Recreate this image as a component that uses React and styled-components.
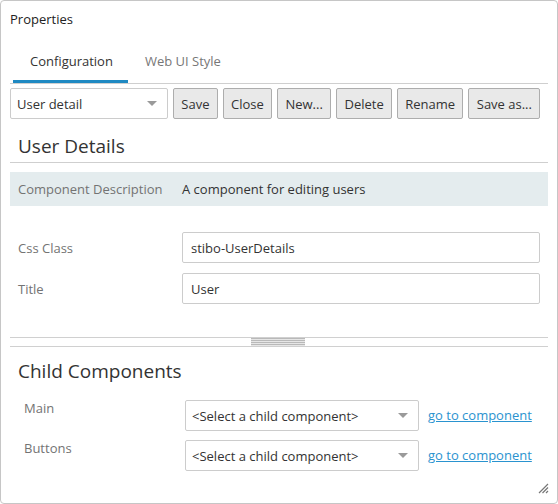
import React from 'react';
import styled, { createGlobalStyle } from 'styled-components';

const GlobalStyle = createGlobalStyle`
    html, body {
        margin: 0;
        padding: 0;
        background: #ffffff;
    }
    body {
        font-family: "Open Sans", "Noto Sans", "Liberation Sans", sans-serif;
        font-size: 13px;
        color: #333333;
    }
`;

const Frame = styled.div`
    position: relative;
    box-sizing: border-box;
    width: 558px;
    height: 504px;
    border: 1px solid #c6c6c6;
    border-radius: 4px;
    padding: 0 9px;
    background: #ffffff;
    overflow: hidden;
`;

const PanelTitle = styled.div`
    padding-top: 9px;
    line-height: 18px;
    color: #222;
`;

const TabBar = styled.div`
    display: flex;
    margin-top: 16px;
    padding-left: 3px;
    border-bottom: 1px solid #cfcfcf;
`;

const Tab = styled.div`
    padding: 8px 15px 10px 17px;
    line-height: 18px;
    font-size: 13px;
    color: ${(p) => (p.active ? '#333' : '#777')};
    border-bottom: 3px solid ${(p) => (p.active ? '#1f89c2' : 'transparent')};
`;

const Toolbar = styled.div`
    display: flex;
    gap: 5px;
    margin-top: 4px;
    height: 31px;
`;

const DropBox = styled.div`
    box-sizing: border-box;
    flex-shrink: 0;
    display: flex;
    align-items: center;
    justify-content: space-between;
    width: ${(p) => p.width}px;
    height: 31px;
    padding: 0 10px 0 6px;
    border: 1px solid #cccccc;
    border-radius: 2px;
    background: #fff;
    color: #333;
`;

const Caret = styled.span`
    width: 0;
    height: 0;
    border-left: 5px solid transparent;
    border-right: 5px solid transparent;
    border-top: 5px solid #9a9a9a;
`;

const Button = styled.button`
    box-sizing: border-box;
    flex-shrink: 0;
    white-space: nowrap;
    height: 31px;
    padding: 0 7.3px;
    border: 1px solid #adadad;
    border-radius: 2px;
    background: #e9e9e9;
    font-family: inherit;
    font-size: 13px;
    color: #333;
`;

const SectionHeading = styled.div`
    margin-top: ${(p) => p.top}px;
    padding: 0 8px ${(p) => (p.ruled ? 3 : 0)}px;
    font-size: 19px;
    line-height: 26px;
    color: #333;
    border-bottom: ${(p) => (p.ruled ? '1px solid #cfcfcf' : 'none')};
`;

const DescRow = styled.div`
    display: grid;
    grid-template-columns: 164px 1fr;
    align-items: center;
    height: 34px;
    margin-top: 9px;
    padding-left: 8px;
    background: #e4ecee;
`;

const Label = styled.div`
    color: #737373;
    line-height: 18px;
`;

const Value = styled.div`
    color: #333;
`;

const Form = styled.div`
    display: flex;
    flex-direction: column;
    gap: 10px;
    margin-top: 26px;
    padding: 0 8px;
`;

const FormRow = styled.div`
    display: grid;
    grid-template-columns: 164px 1fr;
    align-items: center;
`;

const TextInput = styled.div`
    box-sizing: border-box;
    height: 31px;
    display: flex;
    align-items: center;
    padding: 0 8px;
    border: 1px solid #cccccc;
    border-radius: 2px;
    background: #fff;
    color: #333;
`;

const Splitter = styled.div`
    display: flex;
    justify-content: center;
    margin-top: 33px;
    height: 8px;
    border-top: 1px solid #d0d0d0;
    border-bottom: 1px solid #d0d0d0;
`;

const Grip = styled.div`
    width: 54px;
    height: 8px;
    margin-left: -2px;
    background: repeating-linear-gradient(
        to bottom,
        #b9b9b9 0px,
        #b9b9b9 1px,
        #e6e6e6 1px,
        #e6e6e6 2px
    );
`;

const ChildList = styled.div`
    display: flex;
    flex-direction: column;
    gap: 9px;
    margin-top: 16px;
    padding-left: 14px;
`;

const ChildRow = styled.div`
    display: grid;
    grid-template-columns: 161px 234px auto;
    align-items: start;
`;

const ChildLabel = styled(Label)`
    margin-top: -1px;
`;

const GoLink = styled.a`
    align-self: center;
    margin: -2px 0 0 9px;
    color: #2a93cf;
    text-decoration: underline;
    cursor: pointer;
`;

const ResizeGrip = styled.svg`
    position: absolute;
    right: 8px;
    bottom: 9px;
`;

const toolbarButtons = ['Save', 'Close', 'New...', 'Delete', 'Rename', 'Save as...'];
const children = ['Main', 'Buttons'];

export default function App() {
    return (
        <Frame>
            <GlobalStyle />
            <PanelTitle>Properties</PanelTitle>
            <TabBar>
                <Tab active>Configuration</Tab>
                <Tab>Web UI Style</Tab>
            </TabBar>
            <Toolbar>
                <DropBox width={158}>
                    <span>User detail</span>
                    <Caret />
                </DropBox>
                {toolbarButtons.map((b) => (
                    <Button key={b}>{b}</Button>
                ))}
            </Toolbar>

            <SectionHeading top={14} ruled>User Details</SectionHeading>
            <DescRow>
                <Label>Component Description</Label>
                <Value>A component for editing users</Value>
            </DescRow>
            <Form>
                <FormRow>
                    <Label>Css Class</Label>
                    <TextInput>stibo-UserDetails</TextInput>
                </FormRow>
                <FormRow>
                    <Label>Title</Label>
                    <TextInput>User</TextInput>
                </FormRow>
            </Form>

            <Splitter>
                <Grip />
            </Splitter>

            <SectionHeading top={11}>Child Components</SectionHeading>
            <ChildList>
                {children.map((c) => (
                    <ChildRow key={c}>
                        <ChildLabel>{c}</ChildLabel>
                        <DropBox width={234}>
                            <span>&lt;Select a child component&gt;</span>
                            <Caret />
                        </DropBox>
                        <GoLink>go to component</GoLink>
                    </ChildRow>
                ))}
            </ChildList>

            <ResizeGrip width="11" height="11" viewBox="0 0 11 11">
                <path d="M10 1 L1 10 M10 4.5 L4.5 10 M10 8 L8 10" stroke="#777" strokeWidth="1.2" fill="none" />
            </ResizeGrip>
        </Frame>
    );
}
